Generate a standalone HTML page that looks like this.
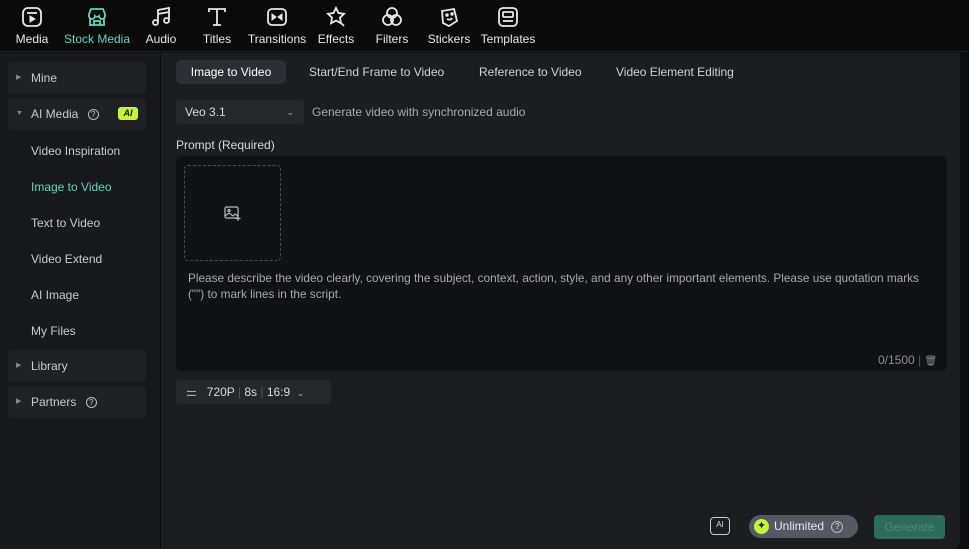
<!DOCTYPE html>
<html><head><meta charset="utf-8"><style>
*{margin:0;padding:0;box-sizing:border-box}
body{width:969px;height:549px;background:#0c0d0f;font-family:"Liberation Sans",sans-serif;color:#d8d9db;position:relative;overflow:hidden;font-size:12px}
.top{position:absolute;left:0;top:0;width:969px;height:52px;background:#0a0a0b;border-bottom:1px solid #222}
.tb{position:absolute;top:6px;text-align:center;font-size:12px;color:#e8e8e8}
.tb svg{display:block;margin:0 auto 4px;width:22px;height:22px}
.side{position:absolute;left:0;top:53px;width:160px;height:496px;background:#17191c}
.main{position:absolute;left:161px;top:53px;width:799px;height:496px;background:#1b1d21;border-radius:0 0 8px 0}
.grp{position:absolute;left:8px;width:138px;height:32px;background:#1f2125;border-radius:5px;font-size:12px;color:#c9cacc;line-height:32px;padding-left:23px}
.grp .ar{position:absolute;left:8px;font-size:7px;color:#888}
.it{position:absolute;left:31px;font-size:12px;color:#c9cacc}
.a{position:absolute;white-space:nowrap}
</style></head><body>
<div class="top">
<div class="tb" style="left:12px;width:40px"><svg viewBox="0 0 22 22" fill="none" stroke="#e8e8e8" stroke-width="1.8"><rect x="2" y="2" width="18" height="18" rx="5"/><path d="M6 7h10" /><path d="M9 10l5 3-5 3z" fill="#e8e8e8" stroke-width="1"/></svg>Media</div>
<div class="tb" style="left:62px;width:70px;color:#5fd6bd"><svg viewBox="0 0 22 22" fill="none" stroke="#5fd6bd" stroke-width="1.8"><path d="M3 8l2-5h12l2 5v2a3 3 0 0 1-6 0 3 3 0 0 1-4 0 3 3 0 0 1-6 0z"/><path d="M4 12v7h14v-7M8 19v-4h6v4"/></svg>Stock Media</div>
<div class="tb" style="left:140px;width:42px"><svg viewBox="0 0 22 22" fill="none" stroke="#e8e8e8" stroke-width="1.8"><path d="M8 16V4l11-2v12"/><circle cx="5.5" cy="16.5" r="2.5"/><circle cx="16.5" cy="14.5" r="2.5"/><path d="M8 8l11-2"/></svg>Audio</div>
<div class="tb" style="left:198px;width:38px"><svg viewBox="0 0 22 22" fill="none" stroke="#e8e8e8" stroke-width="1.8"><path d="M3 6V3h16v3M11 3v16M7 19h8"/></svg>Titles</div>
<div class="tb" style="left:246px;width:62px"><svg viewBox="0 0 22 22" fill="none" stroke="#e8e8e8" stroke-width="1.8"><rect x="2" y="3" width="18" height="16" rx="4"/><path d="M6 8l4 3-4 3zM16 8l-4 3 4 3z" fill="#e8e8e8" stroke-width="1"/></svg>Transitions</div>
<div class="tb" style="left:316px;width:40px"><svg viewBox="0 0 22 22" fill="none" stroke="#e8e8e8" stroke-width="1.8"><path d="M11 2l2.5 5 5.5.8-4 3.9.9 5.5L11 14.6 6.1 17.2l.9-5.5-4-3.9 5.5-.8z"/><path d="M16 17l3 3"/></svg>Effects</div>
<div class="tb" style="left:372px;width:40px"><svg viewBox="0 0 22 22" fill="none" stroke="#e8e8e8" stroke-width="1.8"><circle cx="11" cy="7" r="5"/><circle cx="7" cy="14" r="5"/><circle cx="15" cy="14" r="5"/></svg>Filters</div>
<div class="tb" style="left:426px;width:46px"><svg viewBox="0 0 22 22" fill="none" stroke="#e8e8e8" stroke-width="1.8"><path d="M4 5l12-2 3 12-8 5-6-3z"/><circle cx="9" cy="9" r=".8"/><circle cx="14" cy="8" r=".8"/><path d="M9 13c2 1 4 1 5-1"/></svg>Stickers</div>
<div class="tb" style="left:480px;width:56px"><svg viewBox="0 0 22 22" fill="none" stroke="#e8e8e8" stroke-width="1.8"><rect x="2" y="2" width="18" height="18" rx="4"/><rect x="6" y="6" width="10" height="5" rx="1"/><path d="M6 15h10"/></svg>Templates</div>
</div>
<div class="side">
<div class="grp" style="top:9px"><span class="ar">▶</span>Mine</div>
<div class="grp" style="top:45px"><span class="ar">▼</span>AI Media <span style="display:inline-block;margin-left:6px;width:11px;height:11px;border:1px solid #bbb;border-radius:50%;font-size:8px;line-height:9px;text-align:center;vertical-align:middle">?</span><span style="position:absolute;left:110px;top:9px;width:20px;height:13px;background:#c6f536;color:#1a1a1a;border-radius:3px;font-size:9px;font-weight:bold;font-style:italic;line-height:13px;text-align:center">AI</span></div>
<div class="it" style="top:91px">Video Inspiration</div>
<div class="it" style="top:127px;color:#5fd6bd">Image to Video</div>
<div class="it" style="top:163px">Text to Video</div>
<div class="it" style="top:199px">Video Extend</div>
<div class="it" style="top:235px">AI Image</div>
<div class="it" style="top:271px">My Files</div>
<div class="grp" style="top:297px"><span class="ar">▶</span>Library</div>
<div class="grp" style="top:333px"><span class="ar">▶</span>Partners <span style="display:inline-block;margin-left:6px;width:11px;height:11px;border:1px solid #bbb;border-radius:50%;font-size:8px;line-height:9px;text-align:center;vertical-align:middle">?</span></div>
</div>
<div class="main">
<div class="a" style="left:15px;top:7px;width:110px;height:24px;background:#2c2e33;border-radius:5px;color:#fff;text-align:center;line-height:24px">Image to Video</div>
<div class="a" style="left:148px;top:12px;color:#d0d1d3">Start/End Frame to Video</div>
<div class="a" style="left:318px;top:12px;color:#d0d1d3">Reference to Video</div>
<div class="a" style="left:455px;top:12px;color:#d0d1d3">Video Element Editing</div>
<div class="a" style="left:15px;top:47px;width:128px;height:24px;background:#25272b;border-radius:4px;line-height:24px;padding-left:9px;color:#d8d9db">Veo 3.1<span style="position:absolute;right:10px;font-size:9px;color:#aaa">⌄</span></div>
<div class="a" style="left:151px;top:52px;color:#a8a9ac">Generate video with synchronized audio</div>
<div class="a" style="left:15px;top:85px;color:#d8d9db">Prompt (Required)</div>
<div class="a" style="left:15px;top:103px;width:771px;height:215px;background:#111214;border-radius:5px">
<div class="a" style="left:8px;top:9px;width:97px;height:96px;border:1px dashed #4a4c50;border-radius:4px">
<svg style="position:absolute;left:39px;top:40px" width="18" height="16" viewBox="0 0 18 16" fill="none" stroke="#bbb" stroke-width="1.2"><rect x="1" y="1" width="13" height="11" rx="1.5"/><path d="M1 10l4-3 4 3 2-2 3 2"/><circle cx="5" cy="4.5" r="1"/><path d="M14 10v5M11.5 12.5h5"/></svg></div>
<div class="a" style="left:12px;top:115px;color:#a8a9ac;line-height:15.5px;white-space:normal;width:738px;font-size:11.8px">Please describe the video clearly, covering the subject, context, action, style, and any other important elements. Please use quotation marks ("") to mark lines in the script.</div>
<div class="a" style="left:702px;top:197px;color:#8e8f92">0/1500 <span style="color:#555">|</span> <span style="font-size:10px">🗑</span></div>
</div>
<div class="a" style="left:15px;top:327px;width:155px;height:24px;background:#25272b;border-radius:4px;line-height:24px;color:#d8d9db;padding-left:10px"><span style="color:#aaa">⚌</span>&nbsp;&nbsp; 720P <span style="color:#555">|</span> 8s <span style="color:#555">|</span> 16:9 &nbsp;<span style="font-size:9px;color:#aaa">⌄</span></div>
<div class="a" style="left:549px;top:464px;width:20px;height:18px;border:1.5px solid #ccc;border-radius:4px;font-size:8px;line-height:14px;text-align:center;color:#ddd">AI</div>
<div class="a" style="left:588px;top:462px;width:109px;height:23px;background:#545963;border-radius:12px;line-height:23px;padding-left:25px;color:#e8e8e8">Unlimited <span style="display:inline-block;margin-left:4px;width:12px;height:12px;border:1px solid #bbb;border-radius:50%;font-size:8px;line-height:10px;text-align:center;vertical-align:middle">?</span><span style="position:absolute;left:5px;top:4px;width:15px;height:15px;border-radius:50%;background:#c6f536;color:#222;font-size:11px;line-height:15px;text-align:center">✦</span></div>
<div class="a" style="left:713px;top:462px;width:71px;height:24px;background:#2e6c5a;border-radius:4px;line-height:24px;text-align:center;color:#4a8a78">Generate</div>
</div>
</body></html>
